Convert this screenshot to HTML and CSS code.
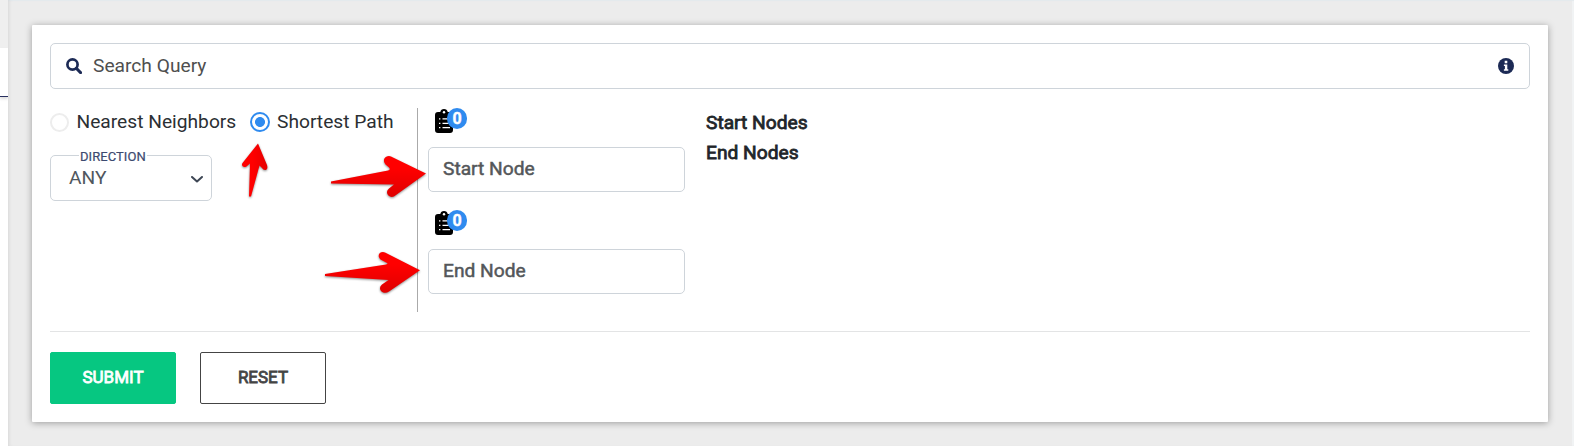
FILE: index.html
```html
<!DOCTYPE html>
<html lang="en">
<head>
<meta charset="utf-8">
<title>Graph query</title>
<link rel="stylesheet" href="styles.css">
</head>
<body>
<svg class="defs" width="0" height="0">
  <symbol id="clipboard" viewBox="0 0 18 24">
    <path d="M3 3h2.300C5.600 1.200 7 0 9 0s3.400 1.200 3.700 3H15a3 3 0 0 1 3 3v15a3 3 0 0 1-3 3H3a3 3 0 0 1-3-3V6a3 3 0 0 1 3-3z"/>
    <circle cx="9" cy="3.200" r="1.200" fill="#fff"/>
    <path d="M4 9.900h1.400M7.500 9.900H15M4 14.300h1.400M7.500 14.300H15M4 18.700h1.400M7.500 18.700H15" stroke="#fff" stroke-width="1.300"/>
  </symbol>
</svg>
<div class="app">
  <aside class="sidebar"><div class="side-head"></div><div class="side-row"></div></aside>
  <main class="page">
    <section class="card">
      <div class="search">
        <svg class="magnifier" viewBox="0 0 16 16"><circle cx="6.500" cy="6.500" r="5.100" fill="none" stroke="#1c2a55" stroke-width="2.700"/><path d="M10.400 10.400l4.200 4.200" stroke="#1c2a55" stroke-width="2.900" stroke-linecap="round"/></svg>
        <span class="search-text">Search Query</span>
        <svg class="info" viewBox="0 0 16 16"><circle cx="8" cy="8" r="8" fill="#1c2a55"/><path d="M6.700 2.800h2.600v2.400H6.700zM5.900 6.500h3.400v4.700h1v1.500H5.900v-1.500h1V8h-1z" fill="#fff"/></svg>
      </div>
      <div class="options">
        <div class="modes">
          <div class="radios">
            <span class="radio"></span><span class="nearest">Nearest Neighbors</span>
            <span class="radio on"></span><span class="shortest">Shortest Path</span>
          </div>
          <div class="select">
            <span class="legend">DIRECTION</span>
            <span class="value">ANY</span>
            <svg class="chevron" viewBox="0 0 12 7"><path d="M1 1l5 4.500L11 1" fill="none" stroke="#3d4654" stroke-width="2" stroke-linecap="round" stroke-linejoin="round"/></svg>
          </div>
        </div>
        <div class="nodes">
          <div class="paste"><svg class="clip"><use href="#clipboard"/></svg><span class="badge">0</span></div>
          <div class="field">Start Node</div>
          <div class="paste"><svg class="clip"><use href="#clipboard"/></svg><span class="badge">0</span></div>
          <div class="field">End Node</div>
        </div>
        <div class="summary"><div>Start Nodes</div><div>End Nodes</div></div>
      </div>
      <div class="actions">
        <button class="btn submit">SUBMIT</button>
        <button class="btn reset">RESET</button>
      </div>
    </section>
  </main>
</div>
<svg class="arrows" width="1574" height="446" viewBox="0 0 1574 446">
  <defs><linearGradient id="red" x1="0" y1="0" x2="0" y2="1"><stop offset=".3" stop-color="#ff0000"/><stop offset="1" stop-color="#df0000"/></linearGradient>
  <linearGradient id="redside" x1="0" y1="0" x2="1" y2="0"><stop offset=".4" stop-color="#ff0000"/><stop offset="1" stop-color="#e60000"/></linearGradient></defs>
  <path fill="url(#red)" d="M331 181.500L388 170.500Q391 169.500 389 167.500L385.500 164.500C382 160 385 156 389 156Q391 156 393 157.500L426 173.500L396 195C392 199 387 196 387 192Q387 190 389 188.500L394 184.500L331 183.500Z"/>
  <path fill="url(#red)" d="M325 274L386 264.500Q389 263.500 386 262.500L380.500 259.500C377 256 379 252 383 252Q385 252 387 253.500L420 270.300L389 291.500C385 294.500 380 292 380 288Q380 286 382 284.500L388.500 280L325 276Z"/>
  <path fill="url(#redside)" d="M258 143.500L267 165C268 168 267 170 265 170Q263 170 262 168L259.500 165.500L251 196.500H249L250 163.500L246.500 166.500C243 168.500 241 165 242.500 163Z"/>
</svg>
</body>
</html>
```
FILE: styles.css
```css
* { box-sizing: border-box; }
body { margin: 0; width: 1574px; height: 446px; overflow: hidden; background: #ececec; font: 19.2px/30px Roboto, sans-serif; color: #212529; }
.defs { position: absolute; }
.app { display: flex; height: 446px; }
.sidebar { width: 8px; background: #fff; }
.side-head { height: 48px; background: #efefef; }
.side-row { height: 49px; border-bottom: 1px solid #28305f; box-shadow: 0 2px 3px #ddd; }
.page { flex: 1; padding: 25px 26px 24px 24px; background: #ececec; box-shadow: inset 3px 0 4px -3px #ccc, inset 0 2px 1px -1px #e5ecf0, inset -2px 0 0 #f1f3f4; }
.card { height: 397px; padding: 18px; background: #fff; border-radius: 1px; box-shadow: 0 1px 7px rgba(0,0,0,.34); }
.search { display: flex; align-items: center; height: 46px; padding: 0 15px; border: 1px solid #ced4da; border-radius: 5px; }
.magnifier { width: 16px; height: 16px; margin-right: 11px; }
.search-text { flex: 1; color: #4f4f4f; }
.info { width: 16px; height: 16px; }
.options { display: flex; height: 242px; padding-top: 19px; }
.modes { width: 367px; }
.radios { display: flex; align-items: center; height: 28px; white-space: nowrap; color: #2b2f33; }
.radio { flex: none; width: 19px; height: 19px; margin-right: 7.500px; border: 2px solid #ededed; border-radius: 50%; }
.radio.on { width: 20px; height: 20px; margin-right: 7px; border-color: #2f8bef; background: radial-gradient(circle, #2f8bef 4.600px, #fff 5.300px); }
.nearest { width: 173.500px; }
.select { position: relative; display: flex; align-items: center; justify-content: space-between; width: 162px; height: 46px; margin-top: 19px; padding: 0 8px 0 18px; border: 1px solid #ced4da; border-radius: 5px; color: #50575e; }
.value { margin-top: -1px; }
.legend { position: absolute; left: 28px; top: -7px; padding: 0 1px; background: #fff; color: #3c4a70; font-size: 13px; line-height: 15px; letter-spacing: .05px; -webkit-text-stroke: .2px #3c4a70; }
.chevron { width: 12px; height: 7px; margin-top: 3px; }
.nodes { height: 204px; width: 268px; padding-left: 10px; border-left: 1px solid #aaa; }
.paste { display: flex; align-items: flex-start; height: 39px; padding-left: 7px; }
.clip { width: 18px; height: 24px; margin-top: 1px; }
.badge { z-index: 1; width: 20px; height: 21px; margin-left: -6px; border-radius: 10px; background: #2f8bef; color: #fff; font-size: 16px; font-weight: 700; line-height: 21px; text-align: center; -webkit-text-stroke: .4px #fff; }
.field { width: 257px; height: 45px; margin-bottom: 18px; padding-left: 14px; border: 1px solid #ced4da; border-radius: 5px; color: #54575a; line-height: 41px; -webkit-text-stroke: .5px #54575a; }
.summary { margin-left: 21px; -webkit-text-stroke: .8px #212529; }
.actions { display: flex; gap: 24px; padding-top: 20px; border-top: 1px solid #e3e4e5; }
.btn { width: 126px; height: 52px; padding: 0 0 3px; border: 1px solid #444; border-radius: 2px; background: #fff; color: #444; font: 17px Roboto, sans-serif; -webkit-text-stroke: .8px #444; }
.submit { border-color: #06c781; background: #06c781; color: #fff; -webkit-text-stroke-color: #fff; }
.arrows { position: absolute; left: 0; top: 0; z-index: 2; filter: drop-shadow(0 1px 1px rgba(0,0,0,.45)); }
```
